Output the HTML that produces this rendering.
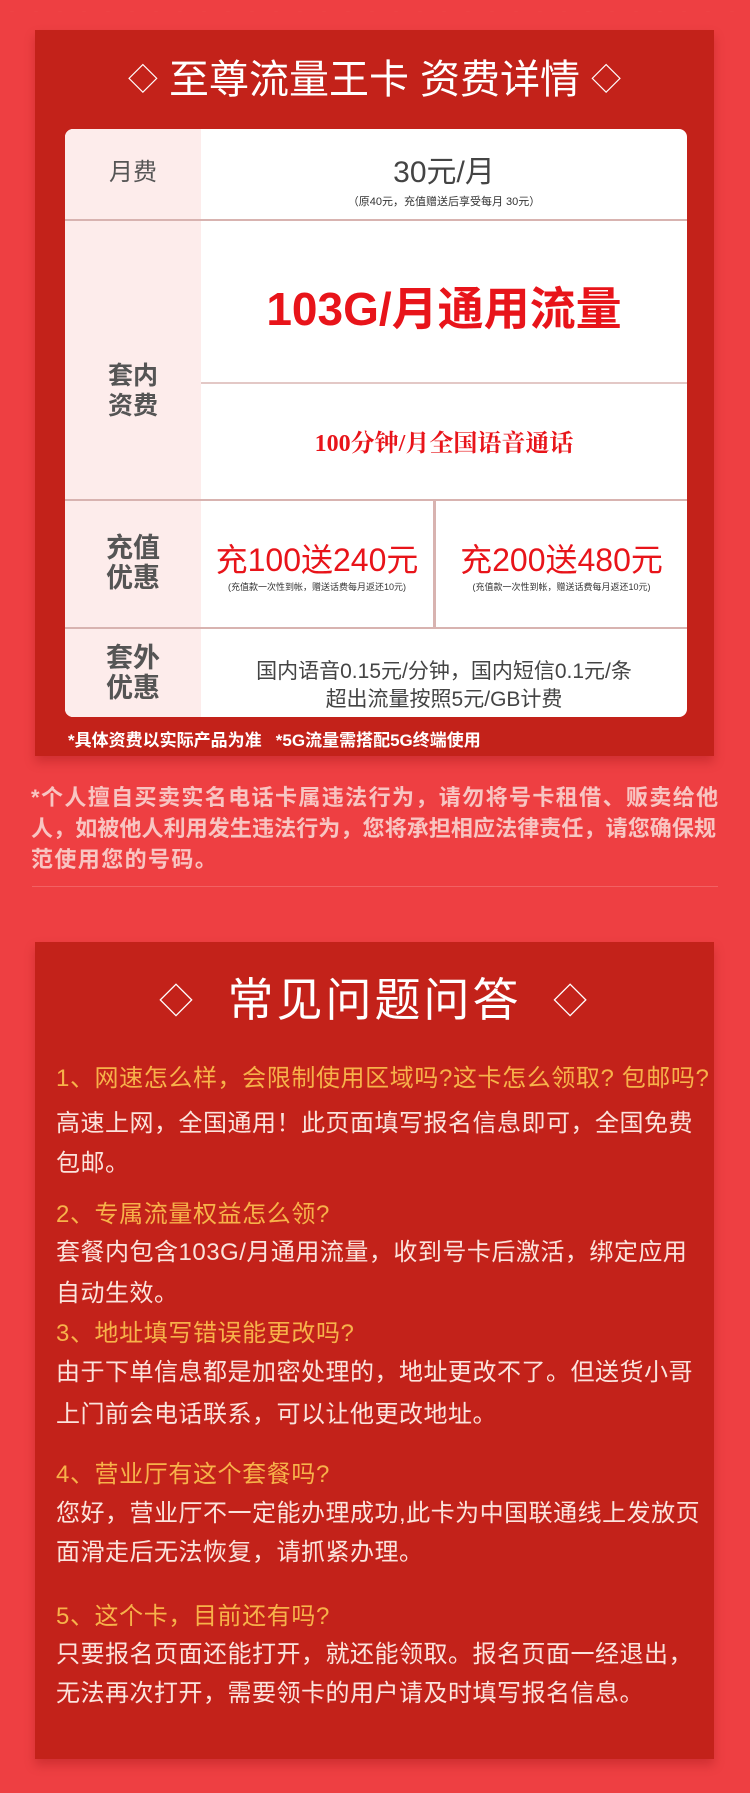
<!DOCTYPE html>
<html><head><meta charset="utf-8">
<style>
*{margin:0;padding:0;box-sizing:border-box}
html,body{width:750px;height:1793px;overflow:hidden;background:#ee3f42}
body{font-family:"Liberation Sans","Noto Sans CJK SC",sans-serif;position:relative}
.a{position:absolute;white-space:nowrap}
.c{text-align:center}
.panel{position:absolute;background:#c3221a;box-shadow:0 6px 10px rgba(120,0,0,.25)}
.scal{position:absolute;left:0;top:0;width:750px;height:12px;background:radial-gradient(circle at 50% 100%,transparent 10px,rgba(255,170,150,.45) 11px,transparent 12.5px) 0 0/24px 24px repeat-x}
.tbl{position:absolute;left:65px;top:129px;width:622px;height:588px;background:#fff;border-radius:8px;overflow:hidden}
.lc{position:absolute;left:0;top:0;width:136px;height:588px;background:#fdeceb}
.hl{position:absolute;left:0;width:622px;height:2px;background:#d8b3b0}
.lab{position:absolute;left:0;width:136px;text-align:center;color:#555;font-weight:bold;font-size:25px;line-height:30px}
.q{color:#f7b24a;font-size:24px;left:56px;letter-spacing:0.6px}
.t{color:#fbe3dc;font-size:24px;left:56px;letter-spacing:0.5px}
.d{font-size:30px;vertical-align:3px}
</style></head><body>
<div class="scal"></div>
<div class="panel" style="left:35px;top:30px;width:679px;height:726px"></div>
<div class="a c" style="left:35px;width:679px;top:55px;color:#fff;font-size:40px;line-height:50px"><span class="d">◇</span> 至尊流量王卡 资费详情 <span class="d">◇</span></div>
<div class="tbl">
 <div class="lc"></div>
 <div class="hl" style="top:90px"></div>
 <div class="hl" style="top:253px;left:136px;width:486px;background:#e3c8c6"></div>
 <div class="hl" style="top:370px"></div>
 <div class="hl" style="top:498px"></div>
 <div style="position:absolute;left:368px;top:370px;width:3px;height:128px;background:#d8b3b0"></div>
 <div class="lab" style="top:29px;font-weight:normal;font-size:24px">月费</div>
 <div class="a c" style="left:136px;width:486px;top:18px;font-size:30px;color:#444">30元/月</div>
 <div class="a c" style="left:136px;width:486px;top:64px;font-size:11px;color:#333">（原40元，充值赠送后享受每月 30元）</div>
 <div class="a c" style="left:136px;width:486px;top:144px;font-size:46px;font-weight:bold;color:#e8141a">103G/月通用流量</div>
 <div class="a c" style="left:136px;width:486px;top:294px;font-size:24px;font-weight:bold;color:#e8141a;font-family:'Liberation Serif','Noto Serif CJK SC',serif">100分钟/月全国语音通话</div>
 <div class="lab" style="top:232px">套内<br>资费</div>
 <div class="lab" style="top:404px;font-size:27px">充值<br>优惠</div>
 <div class="a c" style="left:136px;width:232px;top:406px;font-size:32px;color:#e8141a">充100送240元</div>
 <div class="a c" style="left:136px;width:232px;top:451px;font-size:9px;color:#333">(充值款一次性到帐，赠送话费每月返还10元)</div>
 <div class="a c" style="left:371px;width:251px;top:406px;font-size:32px;color:#e8141a">充200送480元</div>
 <div class="a c" style="left:371px;width:251px;top:451px;font-size:9px;color:#333">(充值款一次性到帐，赠送话费每月返还10元)</div>
 <div class="lab" style="top:514px;font-size:27px">套外<br>优惠</div>
 <div class="a c" style="left:136px;width:486px;top:529px;font-size:21px;line-height:28px;color:#444">国内语音0.15元/分钟，国内短信0.1元/条<br>超出流量按照5元/GB计费</div>
</div>
<div class="a" style="left:68px;top:726px;font-size:17px;font-weight:bold;color:#fff">*具体资费以实际产品为准 &nbsp; *5G流量需搭配5G终端使用</div>
<div class="a" style="left:31px;top:782px;font-size:22px;line-height:31px;color:#f8c5c2;letter-spacing:1.4px;font-weight:bold">*个人擅自买卖实名电话卡属违法行为，请勿将号卡租借、贩卖给他<br><span style="letter-spacing:0.1px">人，如被他人利用发生违法行为，您将承担相应法律责任，请您确保规</span><br>范使用您的号码。</div>
<div style="position:absolute;left:32px;top:886px;width:686px;height:1px;background:rgba(255,200,200,.25)"></div>
<div class="panel" style="left:35px;top:942px;width:679px;height:817px"></div>
<div class="a c" style="left:35px;width:679px;top:972px;color:#fff;font-size:46px;line-height:56px;letter-spacing:3px"><span class="d" style="font-size:34px">◇</span>&nbsp; 常见问题问答 &nbsp;<span class="d" style="font-size:34px">◇</span></div>
<div class="a q" style="top:1058px">1、网速怎么样，会限制使用区域吗?这卡怎么领取? 包邮吗?</div>
<div class="a t" style="top:1104px;line-height:40px;white-space:normal;width:650px">高速上网，全国通用！此页面填写报名信息即可，全国免费包邮。</div>
<div class="a q" style="top:1194px">2、专属流量权益怎么领?</div>
<div class="a t" style="top:1232px;line-height:41px;white-space:normal;width:650px">套餐内包含103G/月通用流量，收到号卡后激活，绑定应用自动生效。</div>
<div class="a q" style="top:1313px">3、地址填写错误能更改吗?</div>
<div class="a t" style="top:1352px;line-height:42px;white-space:normal;width:650px">由于下单信息都是加密处理的，地址更改不了。但送货小哥上门前会电话联系，可以让他更改地址。</div>
<div class="a q" style="top:1454px">4、营业厅有这个套餐吗?</div>
<div class="a t" style="top:1494px;line-height:39px;white-space:normal;width:650px">您好，营业厅不一定能办理成功,此卡为中国联通线上发放页面滑走后无法恢复，请抓紧办理。</div>
<div class="a q" style="top:1596px">5、这个卡，目前还有吗?</div>
<div class="a t" style="top:1635px;line-height:39px;white-space:normal;width:660px">只要报名页面还能打开，就还能领取。报名页面一经退出，无法再次打开，需要领卡的用户请及时填写报名信息。</div>
</body></html>
